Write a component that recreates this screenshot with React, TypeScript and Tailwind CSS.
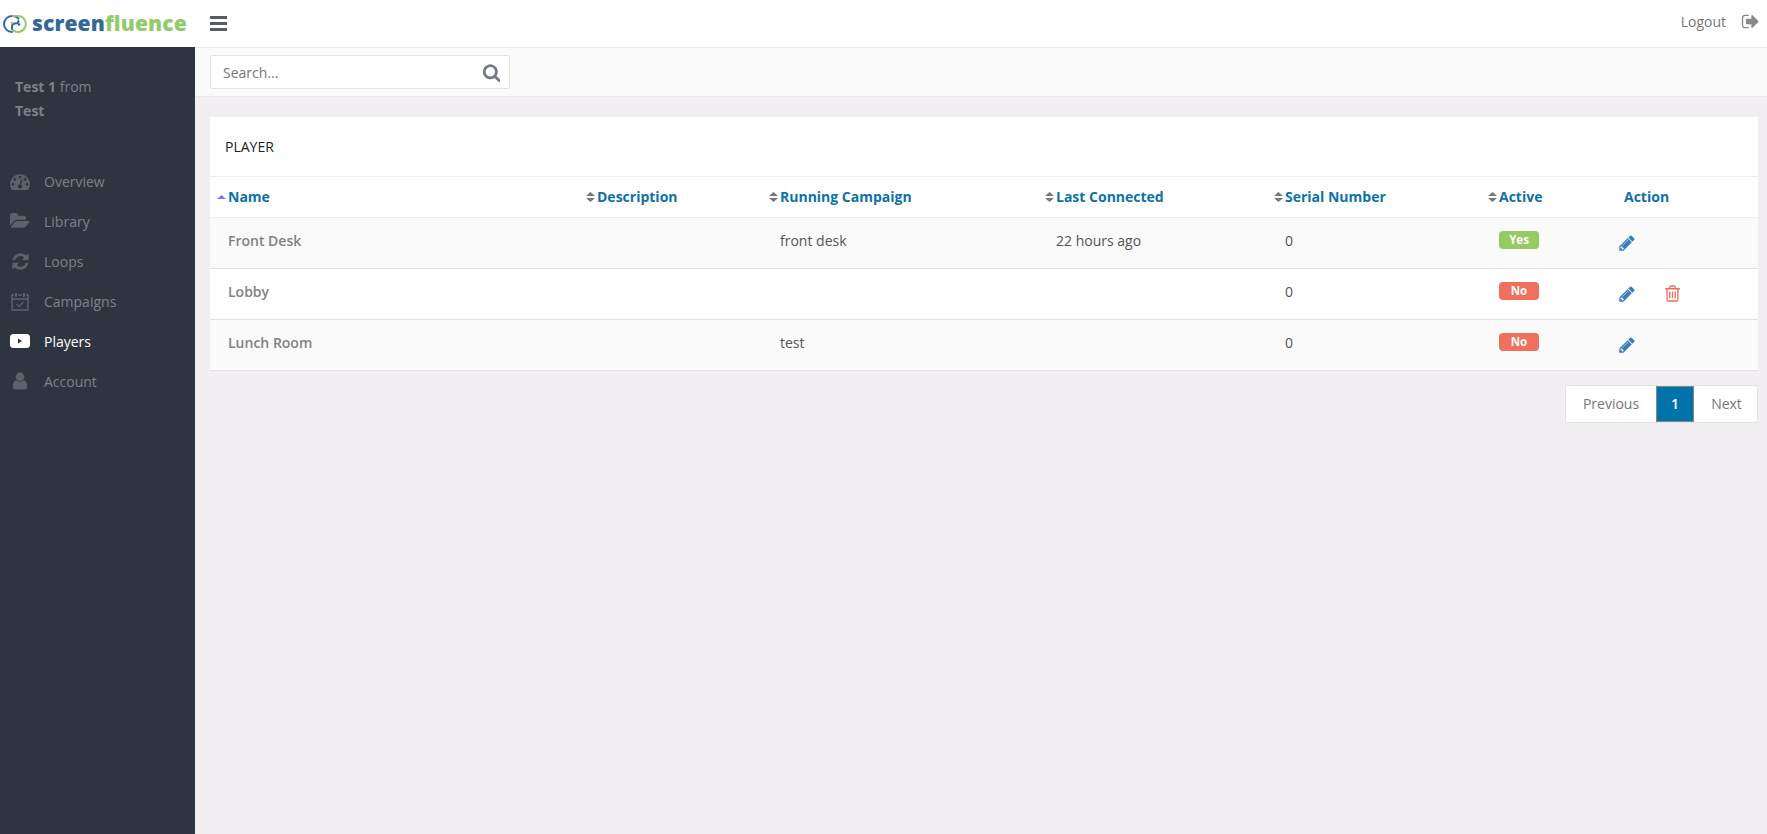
import type { ReactNode } from "react";

const FONT = "font-['Open_Sans',sans-serif]";

function Fa({ d, vb = "0 0 1792 1792", className }: { d: string; vb?: string; className?: string }) {
  return (
    <svg viewBox={vb} fill="currentColor" className={className}>
      <path d={d} />
    </svg>
  );
}

const icons = {
  dashboard:
    "M384 1184q0-53-37.5-90.5t-90.5-37.5-90.5 37.5-37.5 90.5 37.5 90.5 90.5 37.5 90.5-37.5 37.5-90.5zm192-448q0-53-37.5-90.5t-90.5-37.5-90.5 37.5-37.5 90.5 37.5 90.5 90.5 37.5 90.5-37.5 37.5-90.5zm428 481l101-382q6-26-7.5-48.5t-38.5-29.5-48 6.5-30 39.5l-101 382q-60 5-107 43.5t-63 98.5q-20 77 20 146t117 89 146-20 89-117q16-60-6-117t-72-91zm660-33q0-53-37.5-90.5t-90.5-37.5-90.5 37.5-37.5 90.5 37.5 90.5 90.5 37.5 90.5-37.5 37.5-90.5zm-640-640q0-53-37.5-90.5t-90.5-37.5-90.5 37.5-37.5 90.5 37.5 90.5 90.5 37.5 90.5-37.5 37.5-90.5zm448 192q0-53-37.5-90.5t-90.5-37.5-90.5 37.5-37.5 90.5 37.5 90.5 90.5 37.5 90.5-37.5 37.5-90.5zm320 448q0 261-141 483-19 29-54 29h-1402q-35 0-54-29-141-221-141-483 0-182 71-348t191-286 286-191 348-71 348 71 286 191 191 286 71 348z",
  folder:
    "M1879 952q0 31-31 66l-336 396q-43 51-120.5 86.5t-143.5 35.5h-1088q-34 0-60.5-13t-26.5-43q0-31 31-66l336-396q43-51 120.5-86.5t143.5-35.5h1088q34 0 60.5 13t26.5 43zm-343-344v160h-832q-94 0-197 47.5t-164 119.5l-337 396-5 6q0-4-.5-12.5t-.5-12.5v-960q0-92 66-158t158-66h320q92 0 158 66t66 158v32h544q92 0 158 66t66 158z",
  refresh:
    "M1639 1056q0 5-1 7-64 268-268 434.5t-478 166.5q-146 0-282.5-55t-243.5-157l-129 129q-19 19-45 19t-45-19-19-45v-448q0-26 19-45t45-19h448q26 0 45 19t19 45-19 45l-137 137q71 66 161 102t187 36q134 0 250-65t186-179q11-17 53-117 8-23 30-23h192q13 0 22.5 9.5t9.5 22.5zm25-800v448q0 26-19 45t-45 19h-448q-26 0-45-19t-19-45 19-45l138-138q-148-137-349-137-134 0-250 65t-186 179q-11 17-53 117-8 23-30 23h-199q-13 0-22.5-9.5t-9.5-22.5v-7q65-268 270-434.5t480-166.5q146 0 284 55.5t245 156.5l130-129q19-19 45-19t45 19 19 45z",
  user:
    "M1536 1399q0 109-62.5 187t-150.5 78h-854q-88 0-150.5-78t-62.5-187q0-85 8.5-160.5t31.5-152 58.5-131 94-89 134.5-34.5q131 128 313 128t313-128q76 0 134.5 34.5t94 89 58.5 131 31.5 152 8.5 160.5zm-256-887q0 159-112.5 271.5t-271.5 112.5-271.5-112.5-112.5-271.5 112.5-271.5 271.5-112.5 271.5 112.5 112.5 271.5z",
  search:
    "M1216 832q0-185-131.5-316.5t-316.5-131.5-316.5 131.5-131.5 316.5 131.5 316.5 316.5 131.5 316.5-131.5 131.5-316.5zm512 832q0 52-38 90t-90 38q-54 0-90-38l-343-342q-179 124-399 124-143 0-273.5-55.5t-225-150-150-225-55.5-273.5 55.5-273.5 150-225 225-150 273.5-55.5 273.5 55.5 225 150 150 225 55.5 273.5q0 220-124 399l343 343q37 37 37 90z",
  pencil:
    "M491 1536l91-91-235-235-91 91v107h128v128h107zm523-928q0-22-22-22-10 0-17 7l-542 542q-7 7-7 17 0 22 22 22 10 0 17-7l542-542q7-7 7-17zm-54-192l416 416-832 832h-416v-416zm683 96q0 53-37 90l-166 166-416-416 166-165q36-38 90-38 53 0 91 38l235 234q37 39 37 91z",
  trash:
    "M704 736v576q0 14-9 23t-23 9h-64q-14 0-23-9t-9-23v-576q0-14 9-23t23-9h64q14 0 23 9t9 23zm256 0v576q0 14-9 23t-23 9h-64q-14 0-23-9t-9-23v-576q0-14 9-23t23-9h64q14 0 23 9t9 23zm256 0v576q0 14-9 23t-23 9h-64q-14 0-23-9t-9-23v-576q0-14 9-23t23-9h64q14 0 23 9t9 23zm128 724v-948h-896v948q0 22 7 40.5t14.5 27 10.5 8.5h832q3 0 10.5-8.5t14.5-27 7-40.5zm-672-1076h448l-48-117q-7-9-17-11h-317q-10 2-17 11zm928 32v64q0 14-9 23t-23 9h-96v948q0 83-47 143.5t-113 60.5h-832q-66 0-113-58.5t-47-141.5v-952h-96q-14 0-23-9t-9-23v-64q0-14 9-23t23-9h309l70-167q15-37 54-63t79-26h320q40 0 79 26t54 63l70 167h309q14 0 23 9t9 23z",
  signOut:
    "M704 1440q0 4 1 20t.5 26.5-3 23.5-10 19.5-20.5 6.5h-320q-119 0-203.5-84.5t-84.5-203.5v-704q0-119 84.5-203.5t203.5-84.5h320q13 0 22.5 9.5t9.5 22.5q0 4 1 20t.5 26.5-3 23.5-10 19.5-20.5 6.5h-320q-66 0-113 47t-47 113v704q0 66 47 113t113 47h312l11.5 1 11.5 3 8 5.5 7 9 2 13.5zm928-544q0 26-19 45l-544 544q-19 19-45 19t-45-19-19-45v-288h-448q-26 0-45-19t-19-45v-384q0-26 19-45t45-19h448v-288q0-26 19-45t45-19 45 19l544 544q19 19 19 45z",
};

function Logo() {
  return (
    <div className="flex items-center">
      {/* two interlocked rings, blue on the left and green on the right */}
      <svg viewBox="0 0 24 18" className="ml-[3px] h-[18px] w-[24px]" fill="none" strokeWidth="2" strokeLinecap="round">
        <path d="M15.5 3.6A8 8 0 0 0 9 1 8 8 0 1 0 9 17" stroke="#2f6aa3" />
        <path d="M10 1.2A8 8 0 0 1 15 1 8 8 0 1 1 9.5 15" stroke="#94cb6a" />
        <path d="M9 14V11.5C9 9.5 10 8.5 12 8.5S15.5 8 15.5 6" stroke="#2f6aa3" />
        <circle cx="9" cy="8" r="1.3" fill="#94cb6a" />
        <circle cx="16" cy="9.5" r="1.3" fill="#2f6aa3" />
      </svg>
      <span className="ml-[5px] text-[21px] font-extrabold leading-none tracking-[0.15px]">
        <span className="text-[#33689b]">screen</span>
        <span className="text-[#94cb6a]">fluence</span>
      </span>
    </div>
  );
}

function NavItem({ label, icon, active }: { label: string; icon: ReactNode; active?: boolean }) {
  return (
    <a className={`flex h-10 items-center pl-[10px] text-[14px] ${active ? "text-white" : "text-[#7d838a]"}`}>
      <span className={`flex w-[20px] justify-center ${active ? "text-white" : "text-[#5a626c]"}`}>{icon}</span>
      <span className="ml-[14px]">{label}</span>
    </a>
  );
}

function Sidebar() {
  return (
    <aside className="w-[195px] shrink-0 bg-[#2d3540]">
      <div className="px-[15px] pt-[28px] text-[14px] leading-[24px] text-[#7d838a]">
        <div>
          <b className="font-bold">Test 1</b> from
        </div>
        <b className="font-bold">Test</b>
      </div>
      <nav className="mt-[38px]">
        <NavItem label="Overview" icon={<Fa d={icons.dashboard} className="h-[20px] w-[20px]" />} />
        <NavItem label="Library" icon={<Fa d={icons.folder} vb="0 0 1920 1792" className="h-[20px] w-[21px]" />} />
        <NavItem label="Loops" icon={<Fa d={icons.refresh} className="h-[19px] w-[19px]" />} />
        <NavItem
          label="Campaigns"
          icon={
            <svg viewBox="0 0 18 19" className="h-[19px] w-[18px]" fill="none" stroke="currentColor" strokeWidth="1.5">
              <path d="M3 3H1v15h16V3h-2M7 3h4" />
              <path d="M1 7h16" />
              <path d="M5 1v4M13 1v4" strokeWidth="2" />
              <path d="M5.5 12l2.5 2.5 4.5-4.5" strokeWidth="1.2" />
            </svg>
          }
        />
        <NavItem
          active
          label="Players"
          icon={
            <svg viewBox="0 0 20 14" className="h-[14px] w-[20px]">
              <rect width="20" height="14" rx="3.5" fill="currentColor" />
              <path d="M8 4.5v5l4-2.5z" fill="#2d3540" />
            </svg>
          }
        />
        <NavItem label="Account" icon={<Fa d={icons.user} className="h-[20px] w-[20px]" />} />
      </nav>
    </aside>
  );
}

function SortHead({ label, asc }: { label: string; asc?: boolean }) {
  return (
    <th className="p-0 text-left">
      <div className="flex items-center pl-[7px] text-[14px] font-bold text-[#0e72a8]">
        {asc ? (
          <svg viewBox="0 0 9 10" className="mr-[2px] h-[10px] w-[9px]">
            <path d="M0 7 4.5 3 9 7z" fill="#7b7be0" />
          </svg>
        ) : (
          <svg viewBox="0 0 9 10" className="mr-[2px] h-[10px] w-[9px]">
            <path d="M0 4 4.5 0 9 4zM0 6h9l-4.5 4z" fill="#777" />
          </svg>
        )}
        {label}
      </div>
    </th>
  );
}

function Badge({ yes }: { yes?: boolean }) {
  return (
    <span
      className={`flex h-[18px] w-[40px] items-center justify-center rounded-[4px] text-[11.5px] font-bold leading-none text-white ${
        yes ? "bg-[#97ca65]" : "bg-[#ef705f]"
      }`}
    >
      {yes ? "Yes" : "No"}
    </span>
  );
}

const rows = [
  { name: "Front Desk", campaign: "front desk", last: "22 hours ago", active: true, del: false, bg: "bg-[#fafafa]" },
  { name: "Lobby", campaign: "", last: "", active: false, del: true, bg: "bg-white" },
  { name: "Lunch Room", campaign: "test", last: "", active: false, del: false, bg: "bg-[#fafafa]" },
];

function PlayerTable() {
  return (
    <table className="w-full table-fixed border-collapse">
      <colgroup>
        <col className="w-[369px]" />
        <col className="w-[183px]" />
        <col className="w-[276px]" />
        <col className="w-[229px]" />
        <col className="w-[214px]" />
        <col className="w-[126px]" />
        <col />
      </colgroup>
      <thead>
        <tr className="h-[40px] border-b border-[#efefef]">
          <SortHead asc label="Name" />
          <SortHead label="Description" />
          <SortHead label="Running Campaign" />
          <SortHead label="Last Connected" />
          <SortHead label="Serial Number" />
          <SortHead label="Active" />
          <th className="pl-[17px] text-left text-[14px] font-bold text-[#0e72a8]">Action</th>
        </tr>
      </thead>
      <tbody className="text-[14px]">
        {rows.map((r, i) => (
          <tr key={r.name} className={`h-[51px] ${r.bg} ${i < 2 ? "border-b border-[#e0e0e0]" : ""}`}>
            <td className="pb-[4px] pl-[18px] font-semibold text-[#828282]">{r.name}</td>
            <td />
            <td className="pb-[4px] pl-[18px] text-[#555]">{r.campaign}</td>
            <td className="pb-[4px] pl-[18px] text-[#555]">{r.last}</td>
            <td className="pb-[4px] pl-[18px] text-[#555]">0</td>
            <td className="pl-[18px]">
              <div className="mt-[-6px]">
                <Badge yes={r.active} />
              </div>
            </td>
            <td className="pl-[11px]">
              <div className="flex items-center">
                <Fa d={icons.pencil} className="h-[18px] w-[18px] text-[#3a7bc0]" />
                {r.del && <Fa d={icons.trash} className="ml-[27px] h-[19px] w-[19px] text-[#ef705f]" />}
              </div>
            </td>
          </tr>
        ))}
      </tbody>
    </table>
  );
}

function Pagination() {
  return (
    <div className="mt-[15px] flex justify-end">
      <div className="flex h-[38px] rounded-[2px] border border-[#e4e4e4] bg-white text-[14px] text-[#777]">
        <a className="flex w-[90px] items-center justify-center pb-[2px]">Previous</a>
        <a className="flex w-[38px] items-center justify-center border border-[#888] bg-[#0073aa] pb-[2px] font-semibold text-white">1</a>
        <a className="flex w-[63px] items-center justify-center pb-[2px] pl-[2px]">Next</a>
      </div>
    </div>
  );
}

export default function App() {
  return (
    <div className={`flex h-screen flex-col bg-[#f1eff2] ${FONT}`}>
      <header className="flex h-[47px] shrink-0 items-center bg-white pr-[8px]">
        <div className="w-[210px]">
          <Logo />
        </div>
        <svg viewBox="0 0 17 15" className="h-[15px] w-[17px] text-[#555c63]" fill="currentColor">
          <path d="M0 0h17v3H0zM0 6h17v3H0zM0 12h17v3H0z" />
        </svg>
        <div className="mb-[4px] ml-auto flex items-center text-[14px] text-[#777]">
          Logout
          <Fa d={icons.signOut} vb="0 0 1664 1792" className="ml-[15px] h-[19px] w-[18px] text-[#888]" />
        </div>
      </header>
      <div className="flex min-h-0 flex-1">
        <Sidebar />
        <main className="min-w-0 flex-1">
          <div className="flex h-[50px] items-start border-y border-[#e9e9e9] bg-[#fafafa] pl-[15px] pt-[7px]">
            <div className="flex h-[34px] w-[300px] items-center justify-between rounded-[2px] border border-[#e4e4e4] bg-white pl-[12px] pr-[9px] text-[14px] text-[#777]">
              Search...
              <Fa d={icons.search} vb="0 0 1664 1792" className="h-[19px] w-[18px] text-[#6f7c88]" />
            </div>
          </div>
          <div className="pl-[15px] pr-[9px] pt-[20px]">
            <section className="bg-white shadow-[0_1px_1px_rgba(0,0,0,0.05)]">
              <h2 className="flex h-[60px] items-center border-b border-[#efefef] pl-[15px] text-[14px] font-normal text-[#222]">PLAYER</h2>
              <PlayerTable />
            </section>
            <Pagination />
          </div>
        </main>
      </div>
    </div>
  );
}
